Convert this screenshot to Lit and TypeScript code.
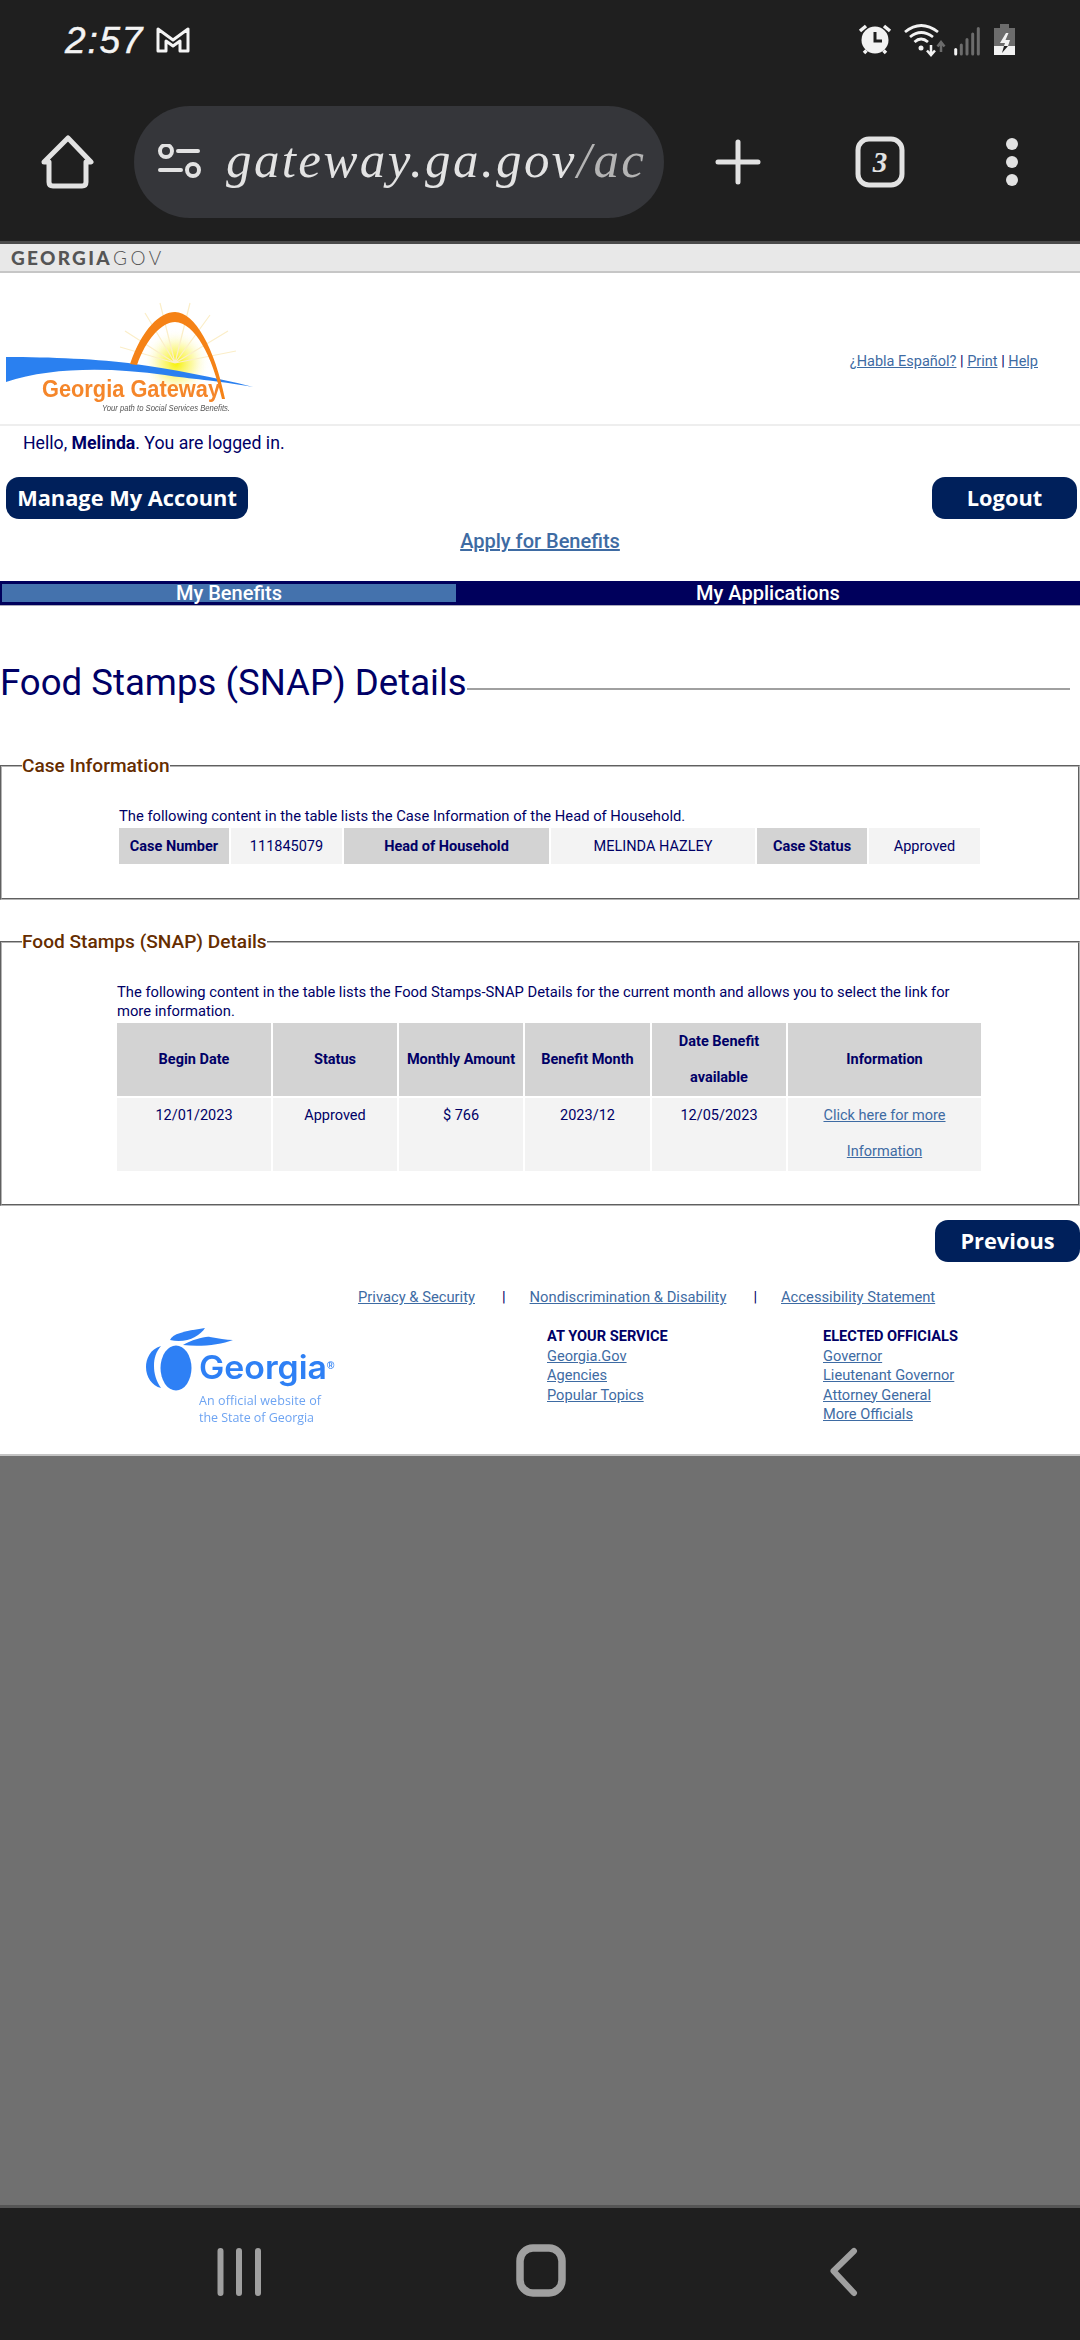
import { LitElement, html, css } from "lit";
import { customElement } from "lit/decorators.js";

@customElement("app-root")
export class AppRoot extends LitElement {
  static styles = css`
    :host { display: flex; flex-direction: column; width: 1080px; height: 2340px; overflow: hidden; background: #fff; font-family: Roboto, "Liberation Sans", sans-serif; color: #000066; }
    * { box-sizing: border-box; }
    a { color: #3e6ba3; text-decoration: underline; }
    svg { display: block; flex: none; }

    .chrome { height: 244px; background: #1f1f1f; border-bottom: 3px solid #4a4a4a; flex: none; }
    .status { height: 80px; display: flex; align-items: center; padding-left: 65px; position: relative; }
    .time { font: italic 400 37px "Liberation Sans", sans-serif; letter-spacing: 1.8px; color: #f4f4f4; width: 90px; line-height: 1; -webkit-text-stroke: .5px #f4f4f4; }
    .status-icons { margin-left: auto; margin-right: 48px; }
    .toolbar { height: 112px; margin-top: 26px; display: flex; align-items: center; padding-left: 39px; }
    .omni { width: 530px; height: 112px; border-radius: 56px; background: #35363a; margin-left: 40px; display: flex; align-items: center; padding-left: 23px; overflow: hidden; }
    .url { font: italic 400 51px "Liberation Serif", serif; color: #e3e3e3; letter-spacing: 2.4px; margin-left: 25px; white-space: nowrap; line-height: 1; margin-top: -4px; }
    .url span { color: #b4b4b4; }
    .plus { margin-left: 51px; }
    .tab { margin-left: 94px; }
    .dots { margin-left: 100px; }

    .ggbar { flex: none; height: 29px; background: #e8e8e8; border-bottom: 2px solid #c6c6c6; display: flex; align-items: center; padding-left: 11px; font: 19px Lato, sans-serif; color: #555; letter-spacing: 2.3px; white-space: nowrap; }
    .ggbar b { font-weight: 900; margin-right: 1px; }
    .ggbar i { font-style: normal; font-weight: 300; letter-spacing: 3.6px; }

    .head { flex: none; height: 153px; border-bottom: 2px solid #eeeeee; display: flex; justify-content: space-between; padding: 16px 42px 0 0; }
    .head-links { margin-top: 63px; font-size: 14.5px; color: #000066; line-height: 20px; }
    .hello { flex: none; height: 36px; padding-left: 23px; font-size: 17.7px; line-height: 35px; }
    .hello b { font-weight: 700; }
    .btns { flex: none; margin-top: 15px; display: flex; justify-content: space-between; padding: 0 3px 0 6px; }
    .btn { height: 42px; border-radius: 13px; background: #00205b; color: #fff; font: 700 21.8px/42px "Open Sans", sans-serif; text-align: center; white-space: nowrap; }
    .b1 { width: 242px; }
    .b2 { width: 145px; }
    .apply { flex: none; height: 30px; margin-top: 7px; text-align: center; font-size: 20px; font-weight: 500; line-height: 30px; }
    .tabs { flex: none; margin-top: 25px; height: 25px; background: #00005c; padding: 3px 0 3px 2px; display: flex; color: #fff; font-size: 20px; font-weight: 500; line-height: 19px; border-bottom: 1px solid #aab; }
    .tabs div { text-align: center; }
    .t1 { width: 454px; background: #4472ad; }
    .t2 { flex: 1; }
    .h1 { flex: none; margin-top: 52px; height: 50px; display: flex; align-items: center; padding-right: 10px; }
    .h1 h1 { margin: 0; font-size: 36.6px; font-weight: 400; line-height: 50px; white-space: nowrap; }
    .h1 div { flex: 1; height: 2px; background: #a0a0a0; margin-top: 12px; }

    fieldset { flex: none; margin: 0; min-width: 0; padding: 30px 0 32px 0; border: 2px groove #b4b4b4; }
    legend { margin-left: 20px; padding: 0; font-size: 19.1px; font-weight: 500; line-height: 22px; color: #662d00; }
    .f1 { margin-top: 47px; }
    .f2 { margin-top: 31px; padding-bottom: 31px; }
    .body { margin-left: 115px; }
    .intro { font-size: 14.75px; line-height: 19px; width: 860px; padding-left: 2px; }
    table { border-collapse: separate; border-spacing: 2px; table-layout: fixed; font-size: 14.5px; text-align: center; }
    th { background: #d3d3d3; font-weight: 700; padding: 0; }
    td { background: #f3f3f3; padding: 0; font-weight: 400; }
    .tb1 th, .tb1 td { height: 36px; }
    .tb2 { margin-left: -2px; }
    .f2 .intro { padding-left: 0; width: 855px; }
    .tb2 th { height: 73px; line-height: 36px; }
    .tb2 td { height: 73px; line-height: 36px; vertical-align: top; }

    .prev { flex: none; margin-top: 14px; display: flex; justify-content: flex-end; }
    .flinks { flex: none; margin-top: 25px; height: 20px; display: flex; font-size: 14.75px; line-height: 20px; padding-left: 358px; }
    .flinks span { color: #000066; margin: 0 24px 0 27px; }
    .foot { flex: none; margin-top: 20px; height: 127px; display: grid; grid-template-columns: 427px 276px 1fr; padding-left: 120px; font-size: 14.6px; line-height: 19.5px; }
    .foot b { display: block; font-weight: 700; color: #000066; }
    .foot a { display: block; }
    .grey { flex: 1; background: #707070; border-top: 2px solid #c4c4c4; }
    .nav { flex: none; height: 135px; background: #1f1f1f; border-top: 3px solid #555; display: flex; align-items: center; }
  `;

  render() {
    const t1 = [["Case Number", 110], ["111845079", 111], ["Head of Household", 205], ["MELINDA HAZLEY", 204], ["Case Status", 110], ["Approved", 111]] as [string, number][];
    const h2 = [["Begin Date", 154], ["Status", 124], ["Monthly Amount", 124], ["Benefit Month", 125], ["Date Benefit available", 134], ["Information", 193]] as [string, number][];
    return html`
      <div class="chrome">
        <div class="status">
          <div class="time">2:57</div>
          <svg width="36" height="28" viewBox="0 0 36 28" fill="none" stroke="#f4f4f4" stroke-width="3" stroke-linejoin="round">
            <path d="M3 3 L18 14 L33 3 V25 H25 V15 L18 20 L11 15 V25 H3 Z"/>
          </svg>
          <svg class="status-icons" width="176" height="60" viewBox="16 0 176 60" fill="none">
            <circle cx="35" cy="30" r="13.5" fill="#f2f2f2"/>
            <path d="M35 22V31H42" stroke="#1f1f1f" stroke-width="3"/>
            <path d="M20 21L26 16M44 16L50 21M24 43l2.500-2.500M46 43l-2.500-2.500" stroke="#f2f2f2" stroke-width="3.500"/>
            <path d="M65 22Q81 9 98 22M70 27Q81 18 93 27M74.500 32Q81 26 88 32" stroke="#f2f2f2" stroke-width="2.800"/>
            <circle cx="81" cy="38" r="2.500" fill="#f2f2f2"/>
            <path d="M91 35V44M87 40.500L91 45L95 40.500" stroke="#f2f2f2" stroke-width="2.500"/>
            <path d="M101 42V33M97.500 36.500L101 32L104.500 36.500" stroke="#6c6c6c" stroke-width="2.500"/>
            <path d="M115.700 39.500V44" stroke="#f2f2f2" stroke-width="3" stroke-linecap="round"/>
            <path d="M121.300 35V44M127 29.500V44M132.700 24V44M138.300 18.500V44" stroke="#6c6c6c" stroke-width="3" stroke-linecap="round"/>
            <path d="M160 14H169V18H175V36H154V18H160Z" fill="#6c6c6c"/>
            <path d="M154 36H175V45H154Z" fill="#f2f2f2"/>
            <path d="M166 23L160 33H165L164 36H168L170 30H165.500L168.500 23Z" fill="#f2f2f2"/>
            <path d="M164 36H168L162 43Z" fill="#1f1f1f"/>
          </svg>
        </div>
        <div class="toolbar">
          <svg width="55" height="54" viewBox="0 0 55 54" fill="none" stroke="#e2e2e2" stroke-width="5" stroke-linejoin="round" stroke-linecap="round">
            <path d="M29 3L52 27H47V47Q47 51 43 51H14Q10 51 10 47V27H5Z"/>
          </svg>
          <div class="omni">
            <svg width="44" height="36" viewBox="0 0 44 36" fill="none" stroke="#e2e2e2" stroke-width="4" stroke-linecap="round">
              <circle cx="9" cy="7" r="6"/><path d="M21 7H41M3 26H24"/><circle cx="36" cy="26" r="6"/>
            </svg>
            <div class="url">gateway.ga.gov<span>/ac</span></div>
          </div>
          <svg class="plus" width="46" height="46" viewBox="0 0 46 46" stroke="#e2e2e2" stroke-width="5" stroke-linecap="round"><path d="M23 3V43M3 23H43"/></svg>
          <svg class="tab" width="50" height="52" viewBox="0 0 50 52" fill="none">
            <rect x="3" y="3" width="44" height="46" rx="11" stroke="#e2e2e2" stroke-width="5"/>
            <text x="25" y="36" text-anchor="middle" font-family="Liberation Serif" font-style="italic" font-weight="700" font-size="29" fill="#e2e2e2">3</text>
          </svg>
          <svg class="dots" width="14" height="48" viewBox="0 0 14 48" fill="#e2e2e2"><circle cx="7" cy="6" r="6"/><circle cx="7" cy="24" r="6"/><circle cx="7" cy="42" r="6"/></svg>
        </div>
      </div>

      <div class="ggbar"><b>GEORGIA</b><i>GOV</i></div>

      <div class="head">
        <svg width="280" height="135" viewBox="0 0 280 135">
          <defs>
            <radialGradient id="sun"><stop offset="0" stop-color="#f6f200"/><stop offset=".25" stop-color="#faf560"/><stop offset=".6" stop-color="#fdfbc8"/><stop offset="1" stop-color="#fff" stop-opacity="0"/></radialGradient>
            <filter id="soft"><feGaussianBlur stdDeviation=".45"/></filter>
          </defs>
          <g filter="url(#soft)">
            <circle cx="176" cy="74" r="34" fill="url(#sun)"/>
            <path d="M175 74L125 42M175 74L145 24M175 74L160 14M175 74L190 14M175 74L210 26M175 74L228 42M175 74L236 62M175 74L120 58" stroke="#fbeec8" stroke-width="1.200"/>
            <path d="M6 68C50 68 100 70 135 75C170 80 215 88 253 98C215 91 190 90 165 86C110 78 50 78 6 93Z" fill="#2b80f0"/>
            <path d="M130 75C142 40 160 23 175 23C195 23 215 60 225 110L222 110C212 66 195 34 175 33C162 33 146 50 137 76Z" fill="#f58213"/>
            <text x="42" y="108" font-family="Liberation Sans" font-weight="700" font-size="23.500" fill="#f5862a" textLength="178" lengthAdjust="spacingAndGlyphs">Georgia Gateway</text>
            <text x="102" y="122" font-family="Liberation Sans" font-style="italic" font-size="8.500" fill="#555" textLength="128" lengthAdjust="spacingAndGlyphs">Your path to Social Services Benefits.</text>
          </g>
        </svg>
        <div class="head-links"><a>¿Habla Español?</a> | <a>Print</a> | <a>Help</a></div>
      </div>

      <div class="hello">Hello, <b>Melinda</b>. You are logged in.</div>
      <div class="btns"><div class="btn b1">Manage My Account</div><div class="btn b2">Logout</div></div>
      <div class="apply"><a>Apply for Benefits</a></div>
      <div class="tabs"><div class="t1">My Benefits</div><div class="t2">My Applications</div></div>
      <div class="h1"><h1>Food Stamps (SNAP) Details</h1><div></div></div>

      <fieldset class="f1">
        <legend>Case Information</legend>
        <div class="body">
          <div class="intro">The following content in the table lists the Case Information of the Head of Household.</div>
          <table class="tb1"><tr>
            ${t1.map(([s, w], i) => i % 2 === 0
              ? html`<th style="width:${w}px">${s}</th>`
              : html`<td style="width:${w}px">${s}</td>`)}
          </tr></table>
        </div>
      </fieldset>

      <fieldset class="f2">
        <legend>Food Stamps (SNAP) Details</legend>
        <div class="body">
          <div class="intro">The following content in the table lists the Food Stamps-SNAP Details for the current month and allows you to select the link for more information.</div>
          <table class="tb2">
            <tr>${h2.map(([s, w]) => html`<th style="width:${w}px">${s}</th>`)}</tr>
            <tr><td>12/01/2023</td><td>Approved</td><td>$ 766</td><td>2023/12</td><td>12/05/2023</td><td><a>Click here for more Information</a></td></tr>
          </table>
        </div>
      </fieldset>

      <div class="prev"><div class="btn b2">Previous</div></div>
      <div class="flinks"><a>Privacy &amp; Security</a><span>|</span><a>Nondiscrimination &amp; Disability</a><span>|</span><a>Accessibility Statement</a></div>
      <div class="foot">
        <svg width="240" height="114" viewBox="0 16 240 114">
          <g filter="url(#soft)" fill="#2f80f5">
            <ellipse cx="56" cy="57" rx="15.500" ry="22.500"/>
            <path d="M41 35C30 38 26 48 26 56C26 66 32 75 41 77C36 70 34 62 34 55C34 47 36 41 41 35Z"/>
            <path d="M50 29C52 23 64 20 85 17C80 25 66 33 50 29Z"/>
            <path d="M63 34C72 29 85 25 90 26C98 27 106 29 113 29C100 34 80 36 63 34Z"/>
            <text x="79" y="68" font-family="Inter" font-weight="600" font-size="33" textLength="128" lengthAdjust="spacingAndGlyphs">Georgia</text>
            <text x="207" y="58" font-family="Liberation Sans" font-weight="700" font-size="10">®</text>
            <text x="79" y="94" font-family="Open Sans" font-size="12.500" fill="#6ea4f2" textLength="122" lengthAdjust="spacing">An official website of</text>
            <text x="79" y="111" font-family="Open Sans" font-size="12.500" fill="#6ea4f2" textLength="115" lengthAdjust="spacing">the State of Georgia</text>
          </g>
        </svg>
        <div><b>AT YOUR SERVICE</b><a>Georgia.Gov</a><a>Agencies</a><a>Popular Topics</a></div>
        <div><b>ELECTED OFFICIALS</b><a>Governor</a><a>Lieutenant Governor</a><a>Attorney General</a><a>More Officials</a></div>
      </div>

      <div class="grey"></div>
      <div class="nav">
        <svg width="1080" height="132" viewBox="0 0 1080 132" fill="none" stroke="#a0a0a0" stroke-linecap="round" stroke-linejoin="round">
          <path d="M220.500 43V85M239 43V85M258 43V85" stroke-width="6"/>
          <rect x="520" y="40" width="42" height="45" rx="13" stroke-width="7.500"/>
          <path d="M854 43L833.500 63L854 85" stroke-width="6"/>
        </svg>
      </div>
    `;
  }
}
